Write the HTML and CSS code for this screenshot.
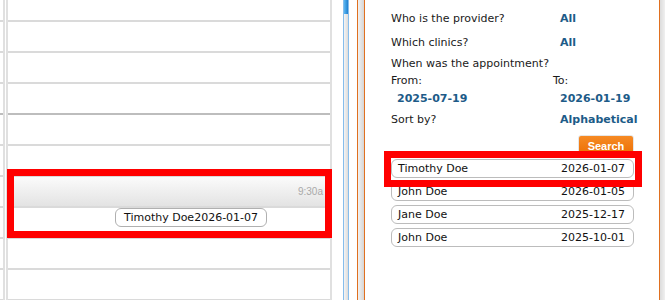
FILE: index.html
```html
<!DOCTYPE html>
<html lang="en">
<head>
    <meta charset="UTF-8">
    <title>Appointments</title>
    <link rel="stylesheet" href="styles.css">
</head>
<body>

    <div class="calendar">
        <div class="gutter">
            <div class="slot first"></div>
            <div class="slot"></div>
            <div class="slot"></div>
            <div class="slot hour"></div>
            <div class="slot"></div>
            <div class="slot"></div>
            <div class="slot"></div>
            <div class="slot"></div>
            <div class="slot"></div>
            <div class="slot"></div>
        </div>
        <div class="vline"></div>
        <div class="vgap"></div>
        <div class="vline"></div>
        <div class="day">
            <div class="slot first"></div>
            <div class="slot"></div>
            <div class="slot"></div>
            <div class="slot hour"></div>
            <div class="slot"></div>
            <div class="slot"></div>
            <!-- selected time slot -->
            <div class="slot band"><span class="time">9:30a</span></div>
            <div class="slot events">
                <div class="event">Timothy Doe2026-01-07</div>
            </div>
            <div class="slot"></div>
            <div class="slot"></div>
        </div>
        <div class="vline"></div>
    </div>

    <div class="spacer-a"></div>
    <div class="scrollbar"><div class="thumb"></div></div>
    <div class="spacer-b"></div>
    <div class="frame-left"></div>

    <div class="panel">
        <div class="f-row r1">
            <span class="label">Who is the provider?</span>
            <span class="value">All</span>
        </div>
        <div class="f-row r2">
            <span class="label">Which clinics?</span>
            <span class="value">All</span>
        </div>
        <div class="f-row r3">
            <span class="label">When was the appointment?</span>
        </div>
        <div class="f-row r4">
            <span class="label">From:</span>
            <span class="label">To:</span>
        </div>
        <div class="f-row r5">
            <span class="value from">2025-07-19</span>
            <span class="value">2026-01-19</span>
        </div>
        <div class="f-row r6">
            <span class="label">Sort by?</span>
            <span class="value">Alphabetical</span>
        </div>
        <div class="actions">
            <button class="search-btn">Search</button>
        </div>
        <div class="results">
            <div class="result"><span>Timothy Doe</span><span>2026-01-07</span></div>
            <div class="result"><span>John Doe</span><span>2026-01-05</span></div>
            <div class="result"><span>Jane Doe</span><span>2025-12-17</span></div>
            <div class="result"><span>John Doe</span><span>2025-10-01</span></div>
        </div>
    </div>

    <div class="frame-right"></div>

    <!-- highlight boxes drawn over the screenshot -->
    <div class="mark mark-slot"></div>
    <div class="mark mark-result"></div>

</body>
</html>
```

FILE: styles.css
```css
body {
    margin: 0;
    width: 665px;
    height: 300px;
    display: flex;
    overflow: hidden;
    position: relative;
    background: #ffffff;
    font-family: "DejaVu Sans", Verdana, sans-serif;
    font-size: 11px;
    color: #1a1a1a;
}

/* ---------- calendar ---------- */

.calendar {
    width: 332px;
    display: flex;
    flex-shrink: 0;
}

.gutter {
    width: 3px;
}

.day {
    width: 322px;
}

.vline {
    width: 2px;
    background: #e0e0e0;
}

.vgap {
    width: 1px;
}

.slot {
    height: 29px;
    border-bottom: 2px solid #dadada;
}

.slot.first {
    height: 20px;
}

.slot.hour {
    border-bottom-color: #bdbdbd;
}

.band {
    background: linear-gradient(#fbfbfb, #e3e3e3);
    display: flex;
    align-items: center;
    justify-content: flex-end;
    padding-right: 7px;
}

.time {
    font-family: "Liberation Sans", Arial, sans-serif;
    font-size: 10px;
    color: #a9a9a9;
}

.events {
    display: flex;
    align-items: flex-start;
}

.event {
    margin-left: 107px;
    height: 17px;
    line-height: 17px;
    padding: 0 8px;
    border: 1px solid #b0b0b0;
    border-radius: 6px;
    color: #111;
    white-space: nowrap;
}

/* ---------- scroll bar + frame ---------- */

.spacer-a {
    width: 11px;
    flex-shrink: 0;
}

.scrollbar {
    width: 4px;
    flex-shrink: 0;
    border-left: 1px solid #86bdec;
    border-right: 1px solid #86bdec;
    background: linear-gradient(90deg, #f4f4f4, #dcdcdc);
}

.thumb {
    height: 14px;
    background: linear-gradient(90deg, #5cb8f2, #1f7fcf);
}

.spacer-b {
    width: 8px;
    flex-shrink: 0;
}

.frame-left {
    width: 6px;
    flex-shrink: 0;
    border-left: 1px solid #e07020;
    border-right: 1px solid #e07020;
    background: linear-gradient(90deg, #f2f2f2, #d6d6d6);
}

.frame-right {
    width: 5px;
    flex-shrink: 0;
    border-left: 1px solid #e07020;
    background: linear-gradient(90deg, #dcdcdc, #f0f0f0);
}

/* ---------- filter panel ---------- */

.panel {
    width: 243px;
    flex-shrink: 0;
    padding: 7px 25px 0 26px;
}

.f-row {
    display: grid;
    grid-template-columns: 162px 1fr;
    align-items: center;
    white-space: nowrap;
}

.r1 { height: 23px; }
.r2 { height: 24px; }
.r3 { height: 18px; }
.r4 { height: 17px; }
.r5 { height: 19px; }
.r6 { height: 22px; }

.r3 .label {
    grid-column: 1 / 3;
}

.value {
    font-weight: bold;
    color: #1d5b88;
    padding-left: 7px;
}

.value.from {
    padding-left: 6px;
}

.actions {
    display: flex;
    justify-content: flex-end;
    margin-top: 5px;
}

.search-btn {
    width: 56px;
    height: 22px;
    padding: 0;
    border: 1px solid #e6e6e6;
    border-radius: 3px;
    background: linear-gradient(#f68a24, #ec6d02);
    color: #ffffff;
    font-family: "Liberation Sans", Arial, sans-serif;
    font-weight: bold;
    font-size: 11px;
}

.results {
    margin-top: 2px;
    display: flex;
    flex-direction: column;
    gap: 4px;
}

.result {
    height: 17px;
    display: flex;
    align-items: center;
    justify-content: space-between;
    padding: 0 8px 0 6px;
    border: 1px solid #bcbcbc;
    border-radius: 6px;
    color: #111;
}

/* ---------- red highlight boxes ---------- */

.mark {
    position: absolute;
    border: 7px solid #ff0000;
}

.mark-slot {
    left: 7px;
    top: 169px;
    width: 311px;
    height: 55px;
}

.mark-result {
    left: 384px;
    top: 151px;
    width: 244px;
    height: 22px;
}
```
